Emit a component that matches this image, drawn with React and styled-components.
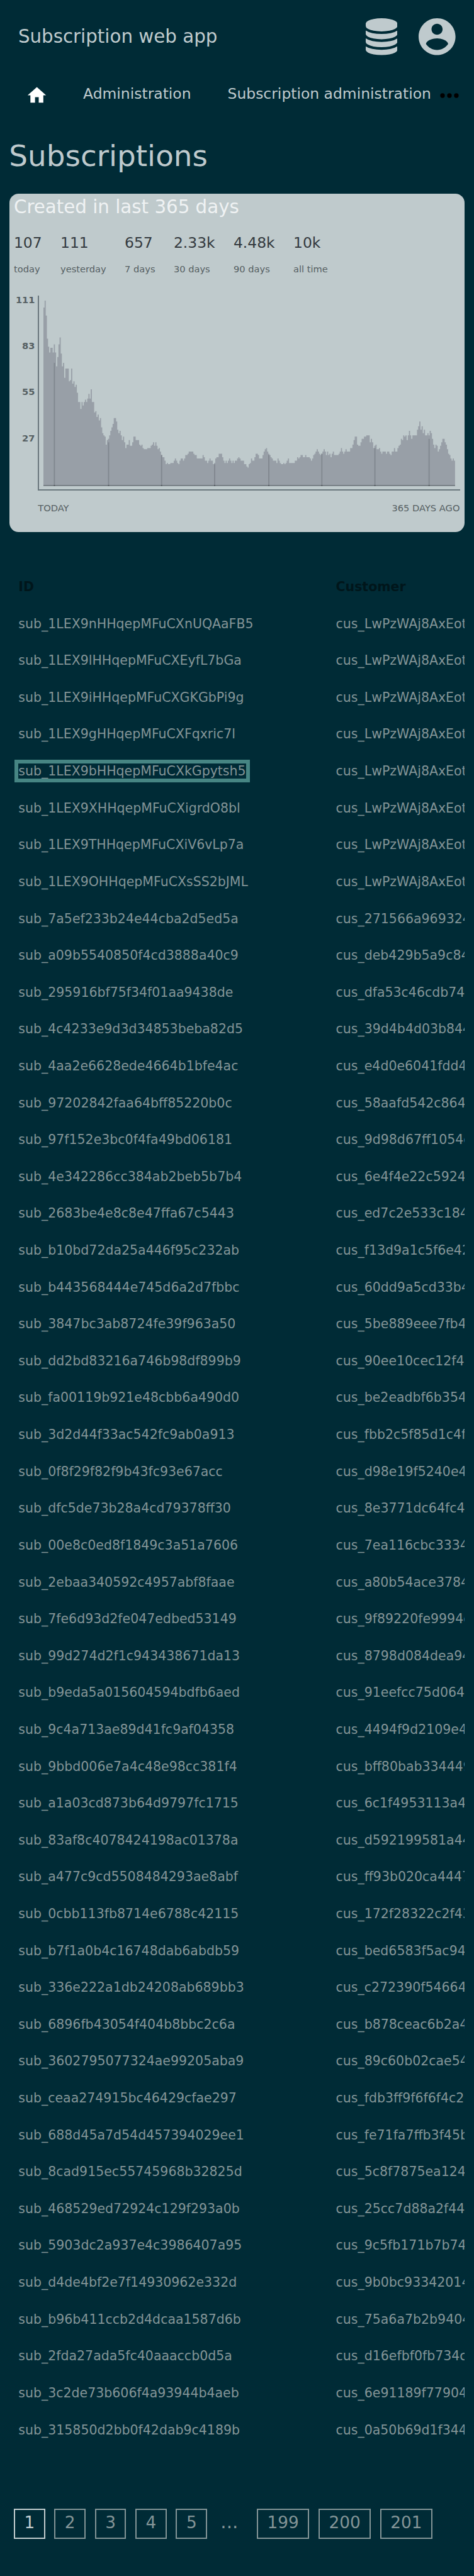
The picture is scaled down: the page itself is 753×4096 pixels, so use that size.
import React from "react";
import styled, { createGlobalStyle } from "styled-components";

const GlobalStyle = createGlobalStyle`
  html { font-size: 29.306px; background: #002b36; }
  body {
    margin: 0;
    background: #002b36;
    color: #bfcacd;
    font-family: "DejaVu Sans", sans-serif;
    overflow-x: hidden;
  }
`;

/* one unit is 1/16 of the root font size */
const u = (n) => `${n / 16}rem`;

const Page = styled.div`
  width: 753px;
  height: 4096px;
  overflow: hidden;
  display: flex;
  flex-direction: column;
`;

const Header = styled.header`
  display: flex;
  align-items: flex-start;
  box-sizing: border-box;
  height: ${u(64)};
  padding: ${u(16)} ${u(16.1)} 0 ${u(15.8)};
`;

const Brand = styled.div`
  flex: 1;
  font-size: ${u(16)};
  line-height: ${u(32)};
`;

const DatabaseIcon = styled.svg`
  width: ${u(27.43)};
  height: ${u(32)};
  margin-right: ${u(18.4)};
  fill: currentColor;
`;

const AccountIcon = styled.svg`
  width: ${u(32)};
  height: ${u(32)};
  fill: currentColor;
`;

const Nav = styled.nav`
  display: flex;
  align-items: center;
  height: ${u(38)};
  padding-left: ${u(22.5)};
`;

const HomeIcon = styled.svg`
  width: ${u(19.2)};
  height: ${u(19.2)};
  margin-right: ${u(30.4)};
  fill: #fff;
`;

const NavLink = styled.a`
  width: ${(p) => u(p.$width)};
  font-size: ${u(12.8)};
  line-height: ${u(35.6)};
  height: ${u(38)};
  white-space: nowrap;
`;

const MoreIcon = styled.svg`
  width: ${u(24)};
  height: ${u(24)};
  fill: #000;
`;

const Title = styled.h1`
  margin: 0;
  padding-left: ${u(7.8)};
  height: ${u(66)};
  font-size: ${u(25.6)};
  font-weight: 400;
  line-height: ${u(66.6)};
`;

const Card = styled.section`
  box-sizing: border-box;
  width: ${u(395)};
  height: ${u(294)};
  margin-left: ${u(8)};
  padding: 0 ${u(4)};
  border-radius: ${u(8)};
  background: #bfcacc;
`;

const CardTitle = styled.h2`
  margin: 0;
  font-size: ${u(16)};
  font-weight: 400;
  line-height: ${u(23.8)};
  color: #eff2f3;
`;

const Stats = styled.div`
  display: flex;
  gap: ${u(16)};
  margin-top: ${u(9.2)};
`;

const Stat = styled.div`
  display: flex;
  flex-direction: column;
`;

const StatValue = styled.span`
  font-size: ${u(12.8)};
  line-height: ${u(20)};
  color: #343a3f;
`;

const StatLabel = styled.span`
  margin-top: ${u(6.5)};
  font-size: ${u(8)};
  line-height: ${u(12)};
  color: #566063;
`;

const Plot = styled.div`
  display: flex;
  margin-top: ${u(0.6)};
`;

const Scale = styled.div`
  width: ${u(18.3)};
  margin-right: ${u(2.5)};
  text-align: right;
  font-size: ${u(8)};
  font-weight: 700;
  line-height: ${u(40.03)};
  color: #566063;
`;

const Axis = styled.div`
  box-sizing: border-box;
  width: ${u(366.1)};
  height: ${u(169.2)};
  margin-top: ${u(16.8)};
  padding-left: ${u(4)};
  border: solid #6b787e;
  border-width: 0 0 2px 2px;
  display: flex;
  align-items: flex-end;
`;

const Bars = styled.svg`
  display: block;
  width: ${u(357)};
  height: ${u(161)};
  margin-bottom: ${u(3)};
`;

const Range = styled.div`
  display: flex;
  justify-content: space-between;
  margin: ${u(9.1)} ${u(0.2)} 0 ${u(20.9)};
  font-size: ${u(8)};
  line-height: ${u(12)};
  color: #566063;
`;

const Table = styled.div`
  width: ${u(403)};
  margin-top: ${u(31.6)};
  overflow: hidden;
`;

const Row = styled.div`
  display: grid;
  grid-template-columns: ${u(275.3)} 1fr;
  padding-left: ${u(16)};
  height: ${u(32)};
  font-size: ${u(11.2)};
  line-height: ${u(32)};
  white-space: nowrap;
  color: #839496;
`;

const HeadRow = styled(Row)`
  font-weight: 700;
  color: #00161b;
`;

const IdLink = styled.a`
  outline: ${(p) => (p.$focused ? "6px solid #468583" : "none")};
`;

const Pager = styled.nav`
  display: flex;
  gap: ${u(8)};
  margin: ${u(52.4)} 0 0 ${u(12)};
`;

const PageLink = styled.a`
  box-sizing: border-box;
  height: ${u(26.1)};
  padding: 0 ${u(7.9)};
  border: 2px solid currentColor;
  font-size: ${u(14.4)};
  line-height: ${u(22.4)};
  color: ${(p) => (p.$current ? "#c3cdcf" : "#839496")};
`;

const Ellipsis = styled.span`
  box-sizing: border-box;
  width: ${u(27.1)};
  padding-left: ${u(3.6)};
  font-size: ${u(16)};
  line-height: ${u(23.3)};
  color: #839496;
`;

const stats = [
  ["107", "today"],
  ["111", "yesterday"],
  ["657", "7 days"],
  ["2.33k", "30 days"],
  ["4.48k", "90 days"],
  ["10k", "all time"],
];

const heights = `155 161 148 128 121 116 120 120 116 123 116 104 112 123 129 115 104 107 94 102 102 102 91 92 102
89 91 86 88 81 73 73 67 73 70 73 75 73 76 80 76 84 73 73 64 65 60 62 57 59 51 46 44 43 36 40 41 44 48 51 54 59 59
56 49 46 48 44 40 43 38 33 36 36 40 35 35 38 43 43 40 40 40 36 35 36 33 32 32 32 33 33 33 35 36 38 35 38 35 32 33
30 27 25 25 22 19 20 19 19 20 20 20 22 24 22 20 19 22
24 24 22 24 27 27 28 30 30 30 30 28 27 27 24 24 24 24 24 27 25 22 22 20 22 24 22 22 19 20 24 25 25 28 28 28 25
22 20 22 20 22 24 22 20 22 20 22 22 24 25 24 22 22 22 19 19 17 16 19 20 24 22 22 25 28 28 27 24 24 24 27 30 32 33
30 28 27 25 24 22 22 22 20 24 22 20 19 19 20 19 20 22 24 20 20 20 20 20 22 22 25 24 25 27 27 25 25 27 25 25 25 24
22 24 27 28 30 32 30
28 27 28 30 32 30 27 30 27 28 25 28 30 27 27 27 27 28 30 33 30 28 30 32 30 30 30 33 33 36 40 43 43 36 35 35 38 41
41 43 43 44 44 44 38 41 38 33 35 36 32 32 33 30 28 30 30 30 28 30 30 28 27 30 30 33 30 30 33 35 36 41 40 44 43 44
40 44 48 44 41 44 44 44 44 49 52 56 49 52 46 49 44 44 46 44 48 46 41 36 33 36 35 30 32 35 38 41 41 38 36 32 28 27
24 22 24 22`
  .trim()
  .split(/\s+/)
  .map(Number);

const monthMarks = [
  [9, 107], [56, 38], [102, 27], [148, 19], [195, 27], [241, 28], [287, 33], [334, 41],
];

const outline =
  "M0 161" + heights.map((h, i) => `V${161 - h}H${i + 1}`).join("") + "V161Z";

const rows = [
  ["sub_1LEX9nHHqepMFuCXnUQAaFB5", "cus_LwPzWAj8AxEot"],
  ["sub_1LEX9lHHqepMFuCXEyfL7bGa", "cus_LwPzWAj8AxEot"],
  ["sub_1LEX9iHHqepMFuCXGKGbPi9g", "cus_LwPzWAj8AxEot"],
  ["sub_1LEX9gHHqepMFuCXFqxric7l", "cus_LwPzWAj8AxEot"],
  ["sub_1LEX9bHHqepMFuCXkGpytsh5", "cus_LwPzWAj8AxEot"],
  ["sub_1LEX9XHHqepMFuCXigrdO8bl", "cus_LwPzWAj8AxEot"],
  ["sub_1LEX9THHqepMFuCXiV6vLp7a", "cus_LwPzWAj8AxEot"],
  ["sub_1LEX9OHHqepMFuCXsSS2bJML", "cus_LwPzWAj8AxEot"],
  ["sub_7a5ef233b24e44cba2d5ed5a", "cus_271566a969324"],
  ["sub_a09b5540850f4cd3888a40c9", "cus_deb429b5a9c84"],
  ["sub_295916bf75f34f01aa9438de", "cus_dfa53c46cdb74"],
  ["sub_4c4233e9d3d34853beba82d5", "cus_39d4b4d03b844"],
  ["sub_4aa2e6628ede4664b1bfe4ac", "cus_e4d0e6041fdd4"],
  ["sub_97202842faa64bff85220b0c", "cus_58aafd542c864"],
  ["sub_97f152e3bc0f4fa49bd06181", "cus_9d98d67ff1054c"],
  ["sub_4e342286cc384ab2beb5b7b4", "cus_6e4f4e22c5924"],
  ["sub_2683be4e8c8e47ffa67c5443", "cus_ed7c2e533c184"],
  ["sub_b10bd72da25a446f95c232ab", "cus_f13d9a1c5f6e42"],
  ["sub_b443568444e745d6a2d7fbbc", "cus_60dd9a5cd33b4"],
  ["sub_3847bc3ab8724fe39f963a50", "cus_5be889eee7fb4"],
  ["sub_dd2bd83216a746b98df899b9", "cus_90ee10cec12f4"],
  ["sub_fa00119b921e48cbb6a490d0", "cus_be2eadbf6b354"],
  ["sub_3d2d44f33ac542fc9ab0a913", "cus_fbb2c5f85d1c4f"],
  ["sub_0f8f29f82f9b43fc93e67acc", "cus_d98e19f5240e4"],
  ["sub_dfc5de73b28a4cd79378ff30", "cus_8e3771dc64fc4"],
  ["sub_00e8c0ed8f1849c3a51a7606", "cus_7ea116cbc3334"],
  ["sub_2ebaa340592c4957abf8faae", "cus_a80b54ace3784"],
  ["sub_7fe6d93d2fe047edbed53149", "cus_9f89220fe9994c"],
  ["sub_99d274d2f1c943438671da13", "cus_8798d084dea94"],
  ["sub_b9eda5a015604594bdfb6aed", "cus_91eefcc75d064"],
  ["sub_9c4a713ae89d41fc9af04358", "cus_4494f9d2109e4"],
  ["sub_9bbd006e7a4c48e98cc381f4", "cus_bff80bab334449"],
  ["sub_a1a03cd873b64d9797fc1715", "cus_6c1f4953113a4"],
  ["sub_83af8c4078424198ac01378a", "cus_d592199581a44"],
  ["sub_a477c9cd5508484293ae8abf", "cus_ff93b020ca4447"],
  ["sub_0cbb113fb8714e6788c42115", "cus_172f28322c2f43"],
  ["sub_b7f1a0b4c16748dab6abdb59", "cus_bed6583f5ac94"],
  ["sub_336e222a1db24208ab689bb3", "cus_c272390f54664"],
  ["sub_6896fb43054f404b8bbc2c6a", "cus_b878ceac6b2a4"],
  ["sub_3602795077324ae99205aba9", "cus_89c60b02cae54"],
  ["sub_ceaa274915bc46429cfae297", "cus_fdb3ff9f6f6f4c2"],
  ["sub_688d45a7d54d457394029ee1", "cus_fe71fa7ffb3f45b"],
  ["sub_8cad915ec55745968b32825d", "cus_5c8f7875ea124"],
  ["sub_468529ed72924c129f293a0b", "cus_25cc7d88a2f44"],
  ["sub_5903dc2a937e4c3986407a95", "cus_9c5fb171b7b74"],
  ["sub_d4de4bf2e7f14930962e332d", "cus_9b0bc93342014"],
  ["sub_b96b411ccb2d4dcaa1587d6b", "cus_75a6a7b2b9404"],
  ["sub_2fda27ada5fc40aaaccb0d5a", "cus_d16efbf0fb734c"],
  ["sub_3c2de73b606f4a93944b4aeb", "cus_6e91189f77904"],
  ["sub_315850d2bb0f42dab9c4189b", "cus_0a50b69d1f344"],
];

const focusedId = "sub_1LEX9bHHqepMFuCXkGpytsh5";

export default function App() {
  return (
    <Page>
      <GlobalStyle />
      <Header>
        <Brand>Subscription web app</Brand>
        <DatabaseIcon viewBox="0 0 1536 1792">
          <path d="M768 768q237 0 443-43t325-127v170q0 69-103 128t-280 93.5-385 34.5-385-34.5-280-93.5-103-128v-170q119 84 325 127t443 43zm0 768q237 0 443-43t325-127v170q0 69-103 128t-280 93.5-385 34.5-385-34.5-280-93.5-103-128v-170q119 84 325 127t443 43zm0-384q237 0 443-43t325-127v170q0 69-103 128t-280 93.5-385 34.5-385-34.5-280-93.5-103-128v-170q119 84 325 127t443 43zm0-1152q208 0 385 34.5t280 93.5 103 128v128q0 69-103 128t-280 93.5-385 34.5-385-34.5-280-93.5-103-128v-128q0-69 103-128t280-93.5 385-34.5z" />
        </DatabaseIcon>
        <AccountIcon viewBox="2 2 20 20">
          <path d="M12 2C6.48 2 2 6.48 2 12s4.48 10 10 10 10-4.48 10-10S17.52 2 12 2zm0 3c1.66 0 3 1.34 3 3s-1.34 3-3 3-3-1.34-3-3 1.34-3 3-3zm0 14.2c-2.5 0-4.71-1.28-6-3.22.03-1.99 4-3.08 6-3.08 1.99 0 5.97 1.09 6 3.08-1.29 1.94-3.5 3.22-6 3.22z" />
        </AccountIcon>
      </Header>
      <Nav>
        <HomeIcon viewBox="0 0 24 24">
          <path d="M10 20v-6h4v6h5v-8h3L12 3 2 12h3v8z" />
        </HomeIcon>
        <NavLink $width={125.3}>Administration</NavLink>
        <NavLink $width={180.5}>Subscription administration</NavLink>
        <MoreIcon viewBox="0 0 24 24">
          <circle cx="6" cy="12" r="2" />
          <circle cx="12" cy="12" r="2" />
          <circle cx="18" cy="12" r="2" />
        </MoreIcon>
      </Nav>
      <Title>Subscriptions</Title>
      <Card>
        <CardTitle>Created in last 365 days</CardTitle>
        <Stats>
          {stats.map(([value, label]) => (
            <Stat key={label}>
              <StatValue>{value}</StatValue>
              <StatLabel>{label}</StatLabel>
            </Stat>
          ))}
        </Stats>
        <Plot>
          <Scale>
            <div>111</div>
            <div>83</div>
            <div>55</div>
            <div>27</div>
          </Scale>
          <Axis>
            <Bars viewBox="0 0 357 161" preserveAspectRatio="none">
              <path d={outline} fill="#989fa7" />
              {monthMarks.map(([x, h]) => (
                <rect key={x} x={x} y={161 - h} width="1" height={h} fill="#80878f" />
              ))}
              <rect x="0" y="160" width="357" height="1" fill="#777e85" />
              {monthMarks.map(([x]) => (
                <rect key={x} x={x} y="160" width="1" height="1" fill="#54595f" />
              ))}
            </Bars>
          </Axis>
        </Plot>
        <Range>
          <span>TODAY</span>
          <span>365 DAYS AGO</span>
        </Range>
      </Card>
      <Table>
        <HeadRow>
          <span>ID</span>
          <span>Customer</span>
        </HeadRow>
        {rows.map(([id, customer]) => (
          <Row key={id}>
            <div>
              <IdLink $focused={id === focusedId}>{id}</IdLink>
            </div>
            <div>{customer}</div>
          </Row>
        ))}
      </Table>
      <Pager>
        {[1, 2, 3, 4, 5].map((n) => (
          <PageLink key={n} $current={n === 1}>{n}</PageLink>
        ))}
        <Ellipsis>...</Ellipsis>
        {[199, 200, 201].map((n) => (
          <PageLink key={n}>{n}</PageLink>
        ))}
      </Pager>
    </Page>
  );
}
